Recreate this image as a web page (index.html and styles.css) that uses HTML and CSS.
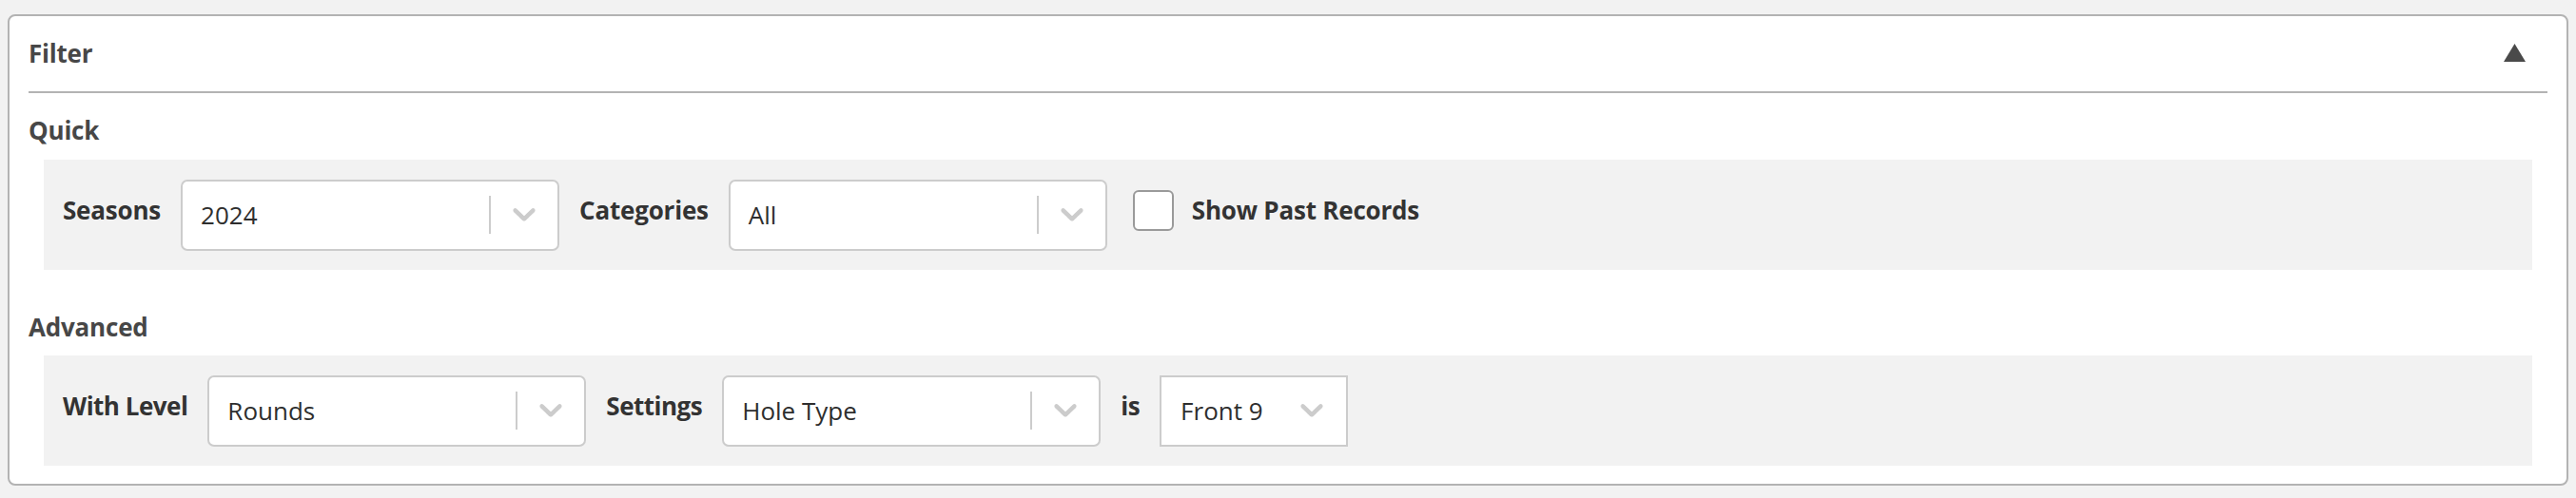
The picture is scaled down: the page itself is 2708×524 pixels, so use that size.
FILE: index.html
```html
<!DOCTYPE html>
<html lang="en">
<head>
<meta charset="utf-8">
<title>Filter</title>
<link rel="stylesheet" href="styles.css">
</head>
<body>
<div class="card">
  <div class="card-header">
    <span class="title">Filter</span>
    <svg class="toggle" width="23" height="19" viewBox="0 0 23 19"><polygon points="11.5,0 23,19 0,19" fill="#4a4a4a"/></svg>
  </div>
  <div class="section">
    <div class="section-title">Quick</div>
    <div class="panel">
      <span class="label">Seasons</span>
      <div class="select">
        <span class="value">2024</span>
        <span class="sep"></span>
        <span class="ind"><svg width="24" height="14" viewBox="4.2 7.2 11.6 7"><path d="M4.516 7.548c0.436-0.446 1.043-0.481 1.576 0l3.908 3.747 3.908-3.747c0.533-0.481 1.141-0.446 1.574 0 0.436 0.445 0.408 1.197 0 1.615-0.406 0.418-4.695 4.502-4.695 4.502-0.217 0.223-0.502 0.335-0.787 0.335s-0.57-0.112-0.789-0.335c0 0-4.287-4.084-4.695-4.502s-0.436-1.17 0-1.615z" fill="#cccccc"/></svg></span>
      </div>
      <span class="label">Categories</span>
      <div class="select">
        <span class="value">All</span>
        <span class="sep"></span>
        <span class="ind"><svg width="24" height="14" viewBox="4.2 7.2 11.6 7"><path d="M4.516 7.548c0.436-0.446 1.043-0.481 1.576 0l3.908 3.747 3.908-3.747c0.533-0.481 1.141-0.446 1.574 0 0.436 0.445 0.408 1.197 0 1.615-0.406 0.418-4.695 4.502-4.695 4.502-0.217 0.223-0.502 0.335-0.787 0.335s-0.57-0.112-0.789-0.335c0 0-4.287-4.084-4.695-4.502s-0.436-1.17 0-1.615z" fill="#cccccc"/></svg></span>
      </div>
      <span class="checkbox"></span>
      <span class="label">Show Past Records</span>
    </div>
  </div>
  <div class="section">
    <div class="section-title">Advanced</div>
    <div class="panel panel-advanced">
      <span class="label">With Level</span>
      <div class="select">
        <span class="value">Rounds</span>
        <span class="sep"></span>
        <span class="ind"><svg width="24" height="14" viewBox="4.2 7.2 11.6 7"><path d="M4.516 7.548c0.436-0.446 1.043-0.481 1.576 0l3.908 3.747 3.908-3.747c0.533-0.481 1.141-0.446 1.574 0 0.436 0.445 0.408 1.197 0 1.615-0.406 0.418-4.695 4.502-4.695 4.502-0.217 0.223-0.502 0.335-0.787 0.335s-0.57-0.112-0.789-0.335c0 0-4.287-4.084-4.695-4.502s-0.436-1.17 0-1.615z" fill="#cccccc"/></svg></span>
      </div>
      <span class="label">Settings</span>
      <div class="select">
        <span class="value">Hole Type</span>
        <span class="sep"></span>
        <span class="ind"><svg width="24" height="14" viewBox="4.2 7.2 11.6 7"><path d="M4.516 7.548c0.436-0.446 1.043-0.481 1.576 0l3.908 3.747 3.908-3.747c0.533-0.481 1.141-0.446 1.574 0 0.436 0.445 0.408 1.197 0 1.615-0.406 0.418-4.695 4.502-4.695 4.502-0.217 0.223-0.502 0.335-0.787 0.335s-0.57-0.112-0.789-0.335c0 0-4.287-4.084-4.695-4.502s-0.436-1.17 0-1.615z" fill="#cccccc"/></svg></span>
      </div>
      <span class="label">is</span>
      <div class="native-select">
        <span class="value">Front 9</span>
        <svg width="24" height="14" viewBox="4.2 7.2 11.6 7"><path d="M4.516 7.548c0.436-0.446 1.043-0.481 1.576 0l3.908 3.747 3.908-3.747c0.533-0.481 1.141-0.446 1.574 0 0.436 0.445 0.408 1.197 0 1.615-0.406 0.418-4.695 4.502-4.695 4.502-0.217 0.223-0.502 0.335-0.787 0.335s-0.57-0.112-0.789-0.335c0 0-4.287-4.084-4.695-4.502s-0.436-1.17 0-1.615z" fill="#cccccc"/></svg>
      </div>
    </div>
  </div>
</div>
</body>
</html>
```
FILE: styles.css
```css
html, body {
  margin: 0;
  background: #f2f2f2;
}
body {
  padding: 15px 8px 13px 8px;
  font-family: "Open Sans", "Liberation Sans", sans-serif;
  color: #333333;
}
.card {
  background: #ffffff;
  border: 2px solid #b3b3b3;
  border-radius: 8px;
  padding-bottom: 19px;
}
.card-header {
  height: 79px;
  margin: 0 20px;
  border-bottom: 2px solid #b3b3b3;
  display: flex;
  align-items: center;
  justify-content: space-between;
  padding-right: 23px;
}
.title, .section-title {
  font-size: 26px;
  font-weight: 700;
  letter-spacing: -0.2px;
  color: #474747;
  line-height: 40px;
}
.title {
  margin-top: -2px;
}
.toggle {
  display: block;
  margin-top: -2px;
}
.section {
  padding: 19px 36px 0 20px;
}
.section + .section {
  padding-top: 40px;
}
.section-title {
  margin-bottom: 11px;
}
.section + .section .section-title {
  margin-bottom: 10px;
}
.panel {
  margin-left: 16px;
  height: 116px;
  background: #f2f2f2;
  display: flex;
  align-items: center;
  padding-left: 20px;
  gap: 21px;
}
.label {
  font-size: 26px;
  font-weight: 700;
  letter-spacing: -0.2px;
  color: #333333;
  padding-bottom: 10px;
  white-space: nowrap;
}
.panel-advanced .label {
  letter-spacing: -0.5px;
}
.select {
  width: 398px;
  height: 75px;
  box-sizing: border-box;
  border: 2px solid #cccccc;
  border-radius: 7px;
  background: #ffffff;
  display: flex;
  align-items: center;
}
.value {
  font-size: 26px;
  color: #2e2e2e;
  flex: 1;
  padding-left: 19px;
  white-space: nowrap;
}
.sep {
  width: 2px;
  height: 40px;
  background: #cccccc;
}
.ind {
  width: 70px;
  display: flex;
  justify-content: center;
  align-items: center;
}
.ind svg, .native-select svg {
  display: block;
}
.checkbox {
  width: 43px;
  height: 43px;
  box-sizing: border-box;
  border: 2px solid #9a9a9a;
  border-radius: 6px;
  background: #ffffff;
  margin-left: 6px;
  margin-right: -2px;
  margin-bottom: 10px;
}
.native-select {
  width: 198px;
  height: 75px;
  box-sizing: border-box;
  border: 2px solid #cccccc;
  background: #ffffff;
  display: flex;
  align-items: center;
  padding-right: 24px;
}
.native-select .value {
  padding-left: 20px;
}
```
